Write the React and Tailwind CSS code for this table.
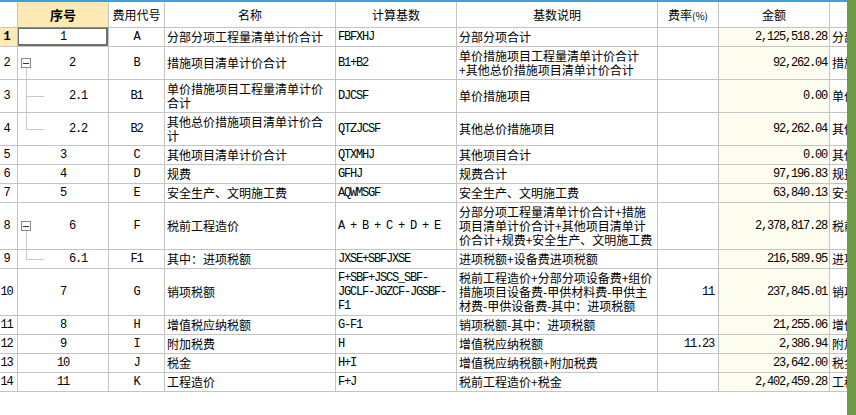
import React from 'react'

const cn = { fontFamily: '"Noto Sans CJK SC", "Noto Sans", sans-serif' }
const mono = { fontFamily: '"Liberation Mono", "DejaVu Sans Mono", monospace' }

const heights = { 1: 'h-[19px]', 2: 'h-[33px]', 3: 'h-[47px]' }

const rows = [
  { n: 1, seq: '1', code: 'A', name: ['分部分项工程量清单计价合计'], base: ['FBFXHJ'], desc: ['分部分项合计'], amt: '2,125,518.28', note: '分部' },
  { n: 2, seq: '2', code: 'B', name: ['措施项目清单计价合计'], base: ['B1+B2'], desc: ['单价措施项目工程量清单计价合计', '+其他总价措施项目清单计价合计'], amt: '92,262.04', note: '措施', tree: 'open' },
  { n: 3, seq: '2.1', code: 'B1', name: ['单价措施项目工程量清单计价', '合计'], base: ['DJCSF'], desc: ['单价措施项目'], amt: '0.00', note: '单价', tree: 'mid' },
  { n: 4, seq: '2.2', code: 'B2', name: ['其他总价措施项目清单计价合', '计'], base: ['QTZJCSF'], desc: ['其他总价措施项目'], amt: '92,262.04', note: '其他', tree: 'last' },
  { n: 5, seq: '3', code: 'C', name: ['其他项目清单计价合计'], base: ['QTXMHJ'], desc: ['其他项目合计'], amt: '0.00', note: '其他' },
  { n: 6, seq: '4', code: 'D', name: ['规费'], base: ['GFHJ'], desc: ['规费合计'], amt: '97,196.83', note: '规费' },
  { n: 7, seq: '5', code: 'E', name: ['安全生产、文明施工费'], base: ['AQWMSGF'], desc: ['安全生产、文明施工费'], amt: '63,840.13', note: '安全' },
  { n: 8, seq: '6', code: 'F', name: ['税前工程造价'], base: ['A + B + C + D + E'], desc: ['分部分项工程量清单计价合计+措施', '项目清单计价合计+其他项目清单计', '价合计+规费+安全生产、文明施工费'], amt: '2,378,817.28', note: '税前', tree: 'open' },
  { n: 9, seq: '6.1', code: 'F1', name: ['其中：进项税额'], base: ['JXSE+SBFJXSE'], desc: ['进项税额+设备费进项税额'], amt: '216,589.95', note: '进项', tree: 'last' },
  { n: 10, seq: '7', code: 'G', name: ['销项税额'], base: ['F+SBF+JSCS_SBF-', 'JGCLF-JGZCF-JGSBF-', 'F1'], desc: ['税前工程造价+分部分项设备费+组价', '措施项目设备费-甲供材料费-甲供主', '材费-甲供设备费-其中：进项税额'], rate: '11', amt: '237,845.01', note: '销项' },
  { n: 11, seq: '8', code: 'H', name: ['增值税应纳税额'], base: ['G-F1'], desc: ['销项税额-其中：进项税额'], amt: '21,255.06', note: '增值' },
  { n: 12, seq: '9', code: 'I', name: ['附加税费'], base: ['H'], desc: ['增值税应纳税额'], rate: '11.23', amt: '2,386.94', note: '附加' },
  { n: 13, seq: '10', code: 'J', name: ['税金'], base: ['H+I'], desc: ['增值税应纳税额+附加税费'], amt: '23,642.00', note: '税金' },
  { n: 14, seq: '11', code: 'K', name: ['工程造价'], base: ['F+J'], desc: ['税前工程造价+税金'], amt: '2,402,459.28', note: '工程' },
]

const cols = 'grid grid-cols-[18px_91px_56px_171px_121px_201px_61px_111px_17px]'
const cell = 'border-r border-b border-[#c4c4c4] flex items-center overflow-hidden'

function Lines({ lines, style }) {
  return (
    <div className="leading-[14px] whitespace-nowrap" style={style}>
      {lines.map((l, i) => <div key={i}>{l}</div>)}
    </div>
  )
}

function Tree({ kind }) {
  if (kind === 'open') {
    return (
      <>
        <div className="absolute left-[3px] top-1/2 -translate-y-1/2 w-[10px] h-[10px] border border-[#8a8a8a] bg-white flex items-center justify-center">
          <div className="w-[6px] h-px bg-[#333]" />
        </div>
        <div className="absolute left-[8px] top-[calc(50%+5px)] bottom-[-1px] w-px bg-[#c8c8c8]" />
      </>
    )
  }
  return (
    <>
      <div className={'absolute left-[8px] top-[-1px] w-px bg-[#c8c8c8] ' + (kind === 'mid' ? 'bottom-[-1px]' : 'h-[calc(50%+1px)]')} />
      <div className="absolute left-[8px] top-1/2 w-[18px] h-px bg-[#c8c8c8]" />
    </>
  )
}

function Row({ r }) {
  const lines = Math.max(r.name.length, r.base.length, r.desc.length)
  const h = heights[lines]
  const sel = r.n === 1
  const seqPad = r.tree === 'open' ? 'pl-[18px]' : r.tree ? 'pl-[30px]' : ''
  return (
    <div className={cols + ' ' + h + ' text-[12px] text-black'}>
      <div className={cell + ' justify-center pr-[4px] ' + (sel ? 'bg-[#fdeab8] font-bold' : 'bg-white')} style={mono}>
        <span className="tracking-[-1.2px]">{r.n}</span>
      </div>
      <div className={cell + ' relative justify-center ' + seqPad} style={mono}>
        {r.tree && <Tree kind={r.tree} />}
        <span className="tracking-[-1.2px]">{r.seq}</span>
        {sel && <div className="absolute left-[-1px] top-[-1px] right-0 bottom-0 border-2 border-[#6e6e6e]" />}
      </div>
      <div className={cell + ' justify-center'} style={mono}>
        <span className="tracking-[-1.2px]">{r.code}</span>
      </div>
      <div className={cell + ' pl-[2px]'}>
        <Lines lines={r.name} style={cn} />
      </div>
      <div className={cell + ' pl-[2px] tracking-[-1.2px]'}>
        <Lines lines={r.base} style={mono} />
      </div>
      <div className={cell + ' pl-[2px]'}>
        <Lines lines={r.desc} style={cn} />
      </div>
      <div className={cell + ' justify-end pr-[4px]'} style={mono}>
        <span className="tracking-[-1.2px]">{r.rate || ''}</span>
      </div>
      <div className={cell + ' justify-end pr-[2px] bg-[#fcfcef]'} style={mono}>
        <span className="tracking-[-1.2px]">{r.amt}</span>
      </div>
      <div className={cell + ' border-r-0 pl-[2px] whitespace-nowrap'} style={cn}>
        {r.note}
      </div>
    </div>
  )
}

export default function App() {
  const heads = ['费用代号', '名称', '计算基数', '基数说明', '费率(%)', '金额', '']
  return (
    <div className="w-[856px] h-[415px] flex bg-white overflow-hidden" style={cn}>
      <div className="w-[847px] flex flex-col">
        <div className="h-[2px] bg-[#3d9fe0]" />
        <div className={cols + ' h-[26px] text-[12px] text-black'}>
          <div className="border-r border-b border-[#c4c4c4]" />
          <div className="border-r border-b border-b-[#3d9fe0] border-r-[#c4c4c4] bg-[#fde9b4] flex items-center justify-center font-bold text-[13px]">序号</div>
          {heads.map((t, i) => (
            <div key={i} className={'border-b border-[#c4c4c4] flex items-center justify-center whitespace-nowrap ' + (i < heads.length - 1 ? 'border-r' : '')}>
              {t === '费率(%)' ? <span>费率<span className="text-[10px]">(%)</span></span> : t}
            </div>
          ))}
        </div>
        {rows.map(r => <Row key={r.n} r={r} />)}
      </div>
      <div className="w-[9px] bg-[#6e9b43]" />
    </div>
  )
}
